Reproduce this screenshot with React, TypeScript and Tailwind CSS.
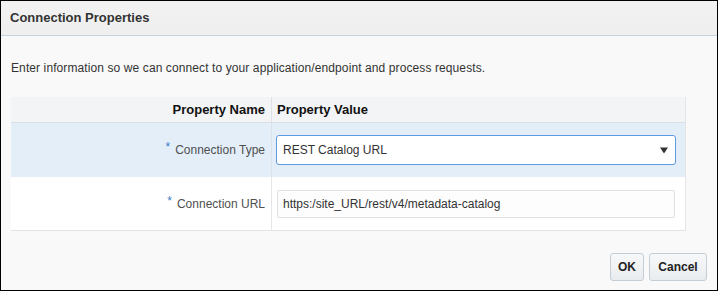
import React from "react";

const font = "[font-family:'Liberation_Sans',Arial,sans-serif]";

export default function App() {
  return (
    <div className={`w-[718px] h-[291px] border border-black bg-[#f9f9f9] flex flex-col ${font}`}>
      <div className="h-[35px] shrink-0 bg-gradient-to-b from-[#f2f2f2] to-[#efefef] border-b border-[#c4d2de] flex items-center px-[9px] pb-[1px]">
        <h1 className="text-[13px] font-bold text-[#333]">Connection Properties</h1>
      </div>

      <div className="flex flex-col pl-[10px] pr-[31px]">
        <p className="text-[12px] tracking-[0.1px] text-[#333] mt-[25px] leading-[14px]">
          Enter information so we can connect to your application/endpoint and process requests.
        </p>

        <div className="mt-[22px] border-r border-[#e5e5e5] bg-white">
          <div className="flex h-[26px] bg-[#f3f4f6] border-b border-[#d8dfe6]">
            <div className="w-[261px] border-r border-[#dde2e7] flex items-center justify-end pr-[6px] text-[13px] font-bold text-[#111]">
              Property Name
            </div>
            <div className="flex-1 flex items-center pl-[5px] text-[13px] font-bold text-[#111]">Property Value</div>
          </div>

          <div className="flex h-[54px] bg-[#e3eef9]">
            <div className="w-[261px] border-r border-[#dde2e7] flex items-center justify-end pr-[6px] text-[12px] text-[#4f4f4f]">
              <span className="text-[#3d7fc6] text-[12px] leading-none self-start mt-[18px] mr-[5px]">*</span>
              Connection Type
            </div>
            <div className="flex-1 flex items-center pl-[4px] pr-[9px]">
              <div className="w-full h-[30px] rounded-[3px] border border-[#5f9be0] bg-white flex items-center justify-between pl-[6px] pr-[7px] text-[12px] text-[#333]">
                <span>REST Catalog URL</span>
                <svg width="8" height="7" viewBox="0 0 8 7">
                  <path d="M0 0.5 H8 L4 6.5 Z" fill="#333" />
                </svg>
              </div>
            </div>
          </div>

          <div className="flex h-[54px] bg-white border-b border-[#e4e4e4]">
            <div className="w-[261px] border-r border-[#e6e6e6] flex items-center justify-end pr-[6px] text-[12px] text-[#4f4f4f]">
              <span className="text-[#3d7fc6] text-[12px] leading-none self-start mt-[18px] mr-[5px]">*</span>
              Connection URL
            </div>
            <div className="flex-1 flex items-center pl-[5px] pr-[10px]">
              <div className="w-full h-[28px] rounded-[2px] border border-[#dfe3e7] bg-[#fdfdfd] flex items-center pl-[5px] text-[12px] text-[#333]">
                https:/site_URL/rest/v4/metadata-catalog
              </div>
            </div>
          </div>
        </div>
      </div>

      <div className="flex justify-end gap-[5px] pr-[10px] mt-auto mb-[9px]">
        <button className="w-[34px] h-[28px] rounded-[3px] border border-[#c4ced7] bg-gradient-to-b from-[#f7f8f9] to-[#e9ecef] text-[12px] font-bold text-[#222]">
          OK
        </button>
        <button className="w-[58px] h-[28px] rounded-[3px] border border-[#c4ced7] bg-gradient-to-b from-[#f7f8f9] to-[#e9ecef] text-[12px] font-bold text-[#222]">
          Cancel
        </button>
      </div>
    </div>
  );
}
